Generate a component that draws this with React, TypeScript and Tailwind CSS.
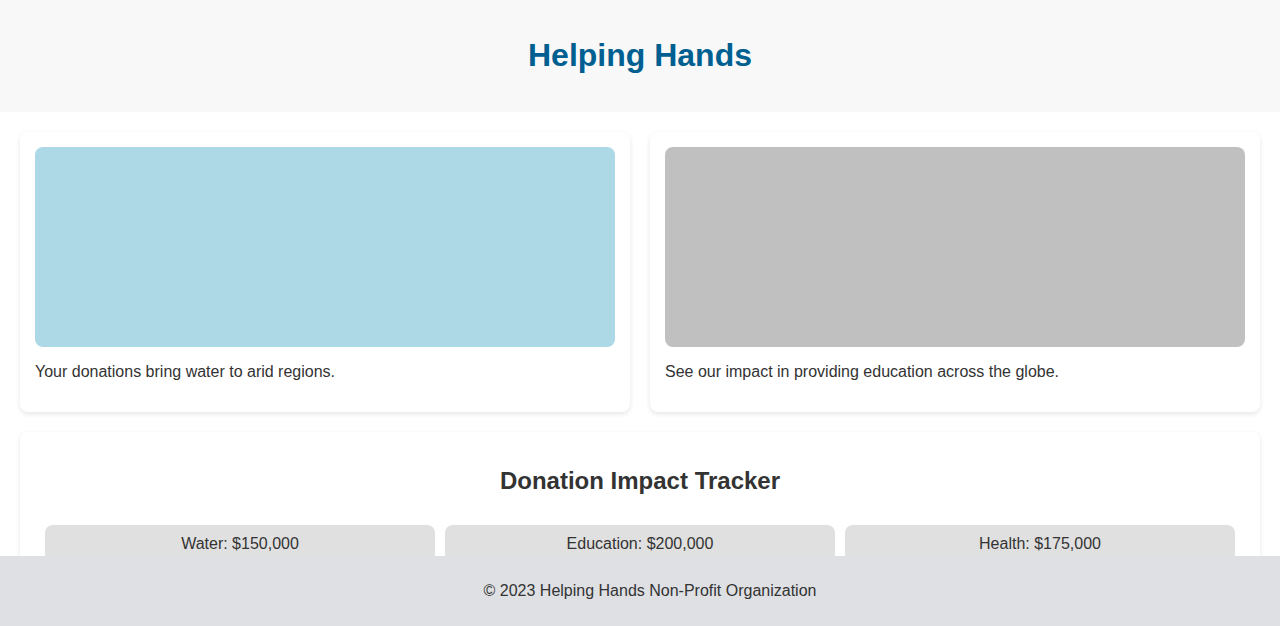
import React from "react";

export default function App() {
  return (
    <div className="min-h-screen bg-white text-[#333] font-['Liberation_Sans',Arial,sans-serif] pb-[70px]">
      <header className="h-[112px] bg-[#f8f8f8] flex items-center justify-center">
        <h1 className="text-[32px] font-bold text-[#005f91] leading-[37px] mt-[-2px]">Helping Hands</h1>
      </header>
      <main className="p-5 flex flex-col gap-5">
        <div className="grid grid-cols-2 gap-5">
          <div className="bg-white rounded-lg shadow-[0_2px_5px_rgba(0,0,0,0.1)] p-[15px]">
            <div className="h-[200px] rounded-lg bg-[#add8e6]" />
            <p className="my-4 text-base leading-[18px]">Your donations bring water to arid regions.</p>
          </div>
          <div className="bg-white rounded-lg shadow-[0_2px_5px_rgba(0,0,0,0.1)] p-[15px]">
            <div className="h-[200px] rounded-lg bg-[#c0c0c0]" />
            <p className="my-4 text-base leading-[18px]">See our impact in providing education across the globe.</p>
          </div>
        </div>
        <section className="bg-white rounded-lg shadow-[0_2px_5px_rgba(0,0,0,0.1)] px-[25px] pt-[35px] pb-[25px]">
          <h2 className="text-2xl font-bold text-center leading-[28px] mb-[30px]">Donation Impact Tracker</h2>
          <div className="grid grid-cols-3 gap-[10px]">
            {["Water: $150,000", "Education: $200,000", "Health: $175,000"].map((t) => (
              <div key={t} className="bg-[#e0e0e0] rounded-lg py-[10px] text-center text-base leading-[18px]">
                {t}
              </div>
            ))}
          </div>
        </section>
      </main>
      <footer className="fixed bottom-0 left-0 right-0 h-[70px] bg-[#dee0e4] flex items-center justify-center pl-5 text-base">
        © 2023 Helping Hands Non-Profit Organization
      </footer>
    </div>
  );
}
